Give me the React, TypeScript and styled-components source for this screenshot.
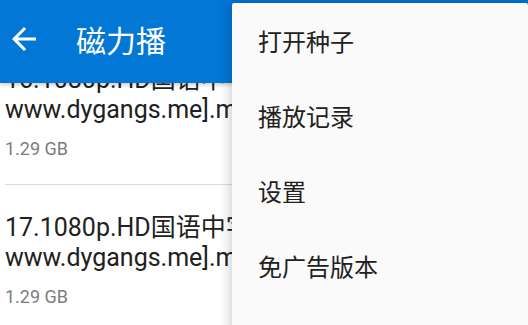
import styled, { createGlobalStyle } from "styled-components";

const GlobalStyle = createGlobalStyle`
  html, body {
    margin: 0;
    padding: 0;
    background: #ffffff;
    font-family: Roboto, "Noto Sans CJK SC", sans-serif;
  }
  #root {
    width: 528px;
    height: 325px;
  }
`;

type Item = {
  line1: string;
  line2: string;
  size: string;
};

const items: Item[] = [
  { line1: "16.1080p.HD国语中字无水印[最新电影", line2: "www.dygangs.me].mp4", size: "1.29 GB" },
  { line1: "17.1080p.HD国语中字无水印[最新电影", line2: "www.dygangs.me].mp4", size: "1.29 GB" },
  { line1: "18.1080p.HD国语中字无水印[最新电影", line2: "www.dygangs.me].mp4", size: "1.29 GB" },
];

const menu = ["打开种子", "播放记录", "设置", "免广告版本"];

export default function App() {
  return (
    <>
      <GlobalStyle />
      <Screen>
        <AppBar>
          <BackButton>
            <svg width="36" height="36" viewBox="0 0 24 24" fill="#ffffff">
              <path d="M20 11H7.83l5.59-5.59L12 4l-8 8 8 8 1.41-1.41L7.83 13H20v-2z" />
            </svg>
          </BackButton>
          <Title>磁力播</Title>
        </AppBar>
        <ListViewport>
          <List $offset={-18}>
            {items.map((item, i) => (
              <Row key={i}>
                <RowTitle>
                  <Line>{item.line1}</Line>
                  <Line>{item.line2}</Line>
                </RowTitle>
                <Size>{item.size}</Size>
              </Row>
            ))}
          </List>
        </ListViewport>
        <Menu>
          {menu.map((m) => (
            <MenuItem key={m}>{m}</MenuItem>
          ))}
        </Menu>
      </Screen>
    </>
  );
}

const Screen = styled.div`
  position: relative;
  width: 528px;
  height: 325px;
  overflow: hidden;
  display: flex;
  flex-direction: column;
  background: #ffffff;
`;

const AppBar = styled.div`
  height: 83px;
  flex-shrink: 0;
  background: #0277d5;
  display: flex;
  align-items: center;
  padding-left: 6px;
  gap: 34px;
  box-shadow: 0 2px 4px rgba(0, 0, 0, 0.2);
  position: relative;
  z-index: 1;
`;

const BackButton = styled.div`
  width: 36px;
  height: 36px;
  display: flex;
  margin-top: -6px;
`;

const Title = styled.div`
  color: #ffffff;
  font-size: 30px;
  font-family: "Noto Sans CJK SC", sans-serif;
  margin-top: -6px;
`;

const ListViewport = styled.div`
  flex: 1;
  overflow: hidden;
`;

const List = styled.div<{ $offset: number }>`
  margin-top: ${(p) => p.$offset}px;
  padding: 0 5px;
`;

const Row = styled.div`
  padding: 0 0 25px;
  & + & {
    border-top: 1px solid #dcdcdc;
    padding-top: 28px;
  }
`;

const RowTitle = styled.div`
  display: flex;
  flex-direction: column;
  color: #212121;
  font-size: 25px;
  line-height: 30px;
`;

const Line = styled.span`
  white-space: nowrap;
  overflow: hidden;
`;

const Size = styled.div`
  margin-top: 14px;
  font-size: 18px;
  line-height: 20px;
  color: #7c7c7c;
`;

const Menu = styled.div`
  position: absolute;
  left: 232px;
  top: 3px;
  right: 0;
  bottom: -20px;
  background: #fafafa;
  box-shadow: 0 0 14px rgba(0, 0, 0, 0.25);
  border-radius: 2px;
  z-index: 2;
  display: flex;
  flex-direction: column;
`;

const MenuItem = styled.div`
  height: 75px;
  display: flex;
  align-items: center;
  padding-left: 26px;
  font-size: 24px;
  color: #212121;
  font-family: "Noto Sans CJK SC", sans-serif;
`;
